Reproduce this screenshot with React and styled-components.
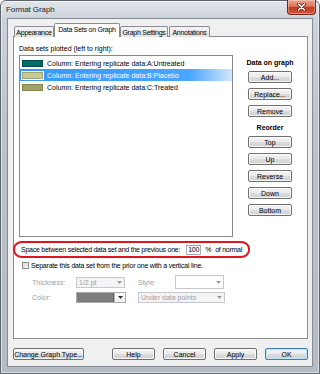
import React from 'react';
import styled, { createGlobalStyle, css } from 'styled-components';

const Global = createGlobalStyle`
  html, body { margin: 0; padding: 0; background: #ffffff; }
  body { font-family: "Liberation Sans", Arial, sans-serif; font-size: 7px; color: #000; }
  #root { width: 320px; height: 374px; }
`;

const Window = styled.div`
  width: 320px;
  height: 374px;
  box-sizing: border-box;
  display: flex;
  flex-direction: column;
  background: linear-gradient(to bottom, #e2e6eb 0px, #cdd3da 18px, #bcc3cb 120px, #b4bbc3 100%);
  border: 1px solid #5f656c;
  border-radius: 6px 6px 0 0;
  box-shadow: inset 0 0 0 1px rgba(255, 255, 255, 0.5);
`;

const TitleBar = styled.div`
  height: 17px;
  display: flex;
  align-items: center;
  padding-left: 5px;
  flex: none;
`;

const Title = styled.span`
  font-size: 8px;
  color: #1e1e1e;
  letter-spacing: -0.1px;
`;

const CloseButton = styled.div`
  align-self: flex-start;
  margin: -1px 3px 0 auto;
  width: 29px;
  height: 15px;
  box-sizing: border-box;
  border: 1px solid #6b2a1c;
  border-top: none;
  border-radius: 0 0 4px 4px;
  background: linear-gradient(to bottom, #e9a797 0%, #dd745e 45%, #c5391c 52%, #d45537 100%);
  box-shadow: inset 0 0 0 1px rgba(255, 210, 200, 0.45);
  display: flex;
  align-items: center;
  justify-content: center;
`;

const Client = styled.div`
  flex: 1;
  margin: 0 6px 6px 6px;
  background: #f0f0f0;
  border: 1px solid #838b94;
  display: flex;
  flex-direction: column;
`;

const TabStrip = styled.div`
  display: flex;
  align-items: flex-end;
  height: 13px;
  margin: 5px 4px -1px 6px;
  position: relative;
  z-index: 1;
`;

const Tab = styled.div`
  box-sizing: border-box;
  width: ${p => p.$w}px;
  height: 11px;
  border: 1px solid #898c95;
  border-bottom: none;
  border-radius: 2px 2px 0 0;
  margin-left: ${p => p.$ml || 0}px;
  background: linear-gradient(to bottom, #f4f4f4, #e3e3e3);
  display: flex;
  align-items: center;
  justify-content: center;
  white-space: nowrap;
  letter-spacing: -0.25px;
  overflow: hidden;
  ${p => p.$active && css`
    height: 14px;
    background: #ffffff;
    padding-bottom: 2px;
  `}
`;

const Panel = styled.div`
  height: 303px;
  box-sizing: border-box;
  margin: 0 4px 0 5px;
  background: #ffffff;
  border: 1px solid #898c95;
  display: flex;
  flex-direction: column;
`;

const TopArea = styled.div`
  display: flex;
  padding: 7px 0 0 5px;
`;

const LeftCol = styled.div`
  width: 214px;
  display: flex;
  flex-direction: column;
`;

const Caption = styled.div`
  line-height: 9px;
  height: 9px;
  margin-bottom: 2px;
  white-space: nowrap;
`;

const List = styled.div`
  height: 182px;
  box-sizing: border-box;
  border: 1px solid #828790;
  background: #ffffff;
  padding-top: 1px;
`;

const ListRow = styled.div`
  height: 12px;
  display: flex;
  align-items: center;
  padding-left: 2px;
  white-space: nowrap;
  ${p => p.$selected && css`
    background: linear-gradient(to right, #3399ff 0%, #4aa6ff 80%, #d2e8fb 100%);
    color: #ffffff;
  `}
`;

const Swatch = styled.span`
  width: 21px;
  height: 7px;
  box-sizing: border-box;
  margin-right: 4px;
  background: ${p => p.$color};
  border: 1px solid ${p => p.$border};
  ${p => p.$selected && css`
    outline: 1px solid #ffffff;
  `}
`;

const RightCol = styled.div`
  margin-left: 15px;
  width: 44px;
  padding-top: 14px;
  display: flex;
  flex-direction: column;
  align-items: stretch;
`;

const GroupHeading = styled.div`
  font-weight: bold;
  line-height: 9px;
  text-align: center;
  white-space: nowrap;
  margin: ${p => p.$top || 0}px -6px 4px;
`;

const Button = styled.div`
  box-sizing: border-box;
  height: 12px;
  width: ${p => (p.$w ? `${p.$w}px` : 'auto')};
  border: 1px solid #707070;
  border-radius: 2px;
  background: linear-gradient(to bottom, #f3f3f3 0%, #ebebeb 48%, #dddddd 52%, #d0d0d0 100%);
  box-shadow: inset 0 0 0 1px rgba(255, 255, 255, 0.75);
  display: flex;
  align-items: center;
  justify-content: center;
  white-space: nowrap;
  margin-bottom: ${p => p.$mb || 0}px;
  ${p => p.$default && css`
    border-color: #3c7fb1;
    box-shadow: inset 0 0 0 1px #bde4f8;
  `}
`;

const SpaceRow = styled.div`
  margin: 4px 0 0 -1px;
  width: 237px;
  height: 17px;
  box-sizing: border-box;
  border: 2px solid #e3141d;
  border-radius: 9px / 8px;
  display: flex;
  align-items: center;
  padding-left: 6px;
  white-space: nowrap;
  letter-spacing: -0.25px;
`;

const NumberBox = styled.div`
  width: 15px;
  height: 10px;
  box-sizing: border-box;
  border: 1px solid #abadb3;
  border-top-color: #9a9da4;
  background: #ffffff;
  margin-left: ${p => p.$ml}px;
  display: flex;
  align-items: center;
  justify-content: flex-end;
  padding-right: 1px;
`;

const Unit = styled.span`
  margin-left: ${p => p.$ml}px;
`;

const CheckRow = styled.div`
  margin: 4px 0 0 8px;
  height: 7px;
  display: flex;
  align-items: center;
  white-space: nowrap;
  letter-spacing: -0.2px;
`;

const CheckBox = styled.span`
  width: 7px;
  height: 7px;
  box-sizing: border-box;
  border: 1px solid #8e8f8f;
  background: linear-gradient(135deg, #d9d9d9, #f6f6f6);
  margin-right: 2px;
  flex: none;
`;

const FieldRow = styled.div`
  display: flex;
  align-items: center;
  height: ${p => p.$h}px;
  margin: ${p => p.$top}px 0 0 18px;
`;

const FieldLabel = styled.span`
  width: ${p => p.$w}px;
  color: #a0a0a0;
  flex: none;
  margin-left: ${p => p.$ml || 0}px;
`;

const Select = styled.div`
  box-sizing: border-box;
  width: ${p => p.$w}px;
  height: ${p => p.$h || 11}px;
  border: 1px solid #c5c8cc;
  background: #f4f4f4;
  color: #a0a0a0;
  display: flex;
  align-items: center;
  padding-left: 2px;
  flex: none;
  margin-left: ${p => p.$ml || 0}px;
  ${p => p.$white && css`
    background: #ffffff;
  `}
`;

const SelectText = styled.span`
  flex: 1;
  white-space: nowrap;
`;

const ArrowSlot = styled.span`
  width: 9px;
  display: flex;
  align-items: center;
  justify-content: center;
  align-self: stretch;
`;

const ColorSelect = styled.div`
  box-sizing: border-box;
  width: 50px;
  height: 11px;
  border: 1px solid #a6a8ab;
  display: flex;
  flex: none;
  background: #ffffff;
`;

const ColorFill = styled.span`
  flex: 1;
  background: #7d7d7d;
  border-right: 1px solid #5f5f5f;
`;

const ColorDrop = styled.span`
  width: 10px;
  display: flex;
  align-items: center;
  justify-content: center;
  background: linear-gradient(to bottom, #ffffff, #eeeeee);
  border-left: 1px solid #bcbcbc;
`;

const Footer = styled.div`
  display: flex;
  align-items: center;
  margin: 9px 4px 0 5px;
  gap: 8px;
`;

const Spacer = styled.div`
  flex: 1;
`;

const Arrow = ({ color = '#9a9a9a' }) => (
  <svg width="5" height="3" viewBox="0 0 5 3">
    <path d="M0 0 H5 L2.5 3 Z" fill={color} />
  </svg>
);

const CloseGlyph = () => (
  <svg width="9" height="8" viewBox="0 0 9 8">
    <path d="M1.5 1 L7.5 7 M7.5 1 L1.5 7" stroke="#5a1b10" strokeWidth="3" strokeLinecap="round" />
    <path d="M1.5 1 L7.5 7 M7.5 1 L1.5 7" stroke="#ffffff" strokeWidth="1.6" strokeLinecap="round" />
  </svg>
);

const rows = [
  { label: 'Column: Entering replicate data:A:Untreated', color: '#006d68', border: '#004c49' },
  { label: 'Column: Entering replicate data:B:Placebo', color: '#c9c995', border: '#a4a46a', selected: true },
  { label: 'Column: Entering replicate data:C:Treated', color: '#a1a16a', border: '#85854f' },
];

export default function App() {
  return (
    <>
      <Global />
      <Window>
        <TitleBar>
          <Title>Format Graph</Title>
          <CloseButton><CloseGlyph /></CloseButton>
        </TitleBar>
        <Client>
          <TabStrip>
            <Tab $w={40}>Appearance</Tab>
            <Tab $w={66} $active>Data Sets on Graph</Tab>
            <Tab $w={48}>Graph Settings</Tab>
            <Tab $w={41} $ml={1}>Annotations</Tab>
          </TabStrip>
          <Panel>
            <TopArea>
              <LeftCol>
                <Caption>Data sets plotted (left to right):</Caption>
                <List>
                  {rows.map(r => (
                    <ListRow key={r.label} $selected={r.selected}>
                      <Swatch $color={r.color} $border={r.border} $selected={r.selected} />
                      {r.label}
                    </ListRow>
                  ))}
                </List>
              </LeftCol>
              <RightCol>
                <GroupHeading>Data on graph</GroupHeading>
                <Button $mb={5}>Add...</Button>
                <Button $mb={5}>Replace...</Button>
                <Button $mb={5}>Remove</Button>
                <GroupHeading $top={1}>Reorder</GroupHeading>
                <Button $mb={5}>Top</Button>
                <Button $mb={5}>Up</Button>
                <Button $mb={5}>Reverse</Button>
                <Button $mb={5}>Down</Button>
                <Button>Bottom</Button>
              </RightCol>
            </TopArea>
            <SpaceRow>
              <span>Space between selected data set and the previous one:</span>
              <NumberBox $ml={6}>100</NumberBox>
              <Unit $ml={4}>%</Unit>
              <Unit $ml={4}>of normal</Unit>
            </SpaceRow>
            <CheckRow>
              <CheckBox />
              Separate this data set from the prior one with a vertical line.
            </CheckRow>
            <FieldRow $h={14} $top={6}>
              <FieldLabel $w={44}>Thickness:</FieldLabel>
              <Select $w={49}>
                <SelectText>1/2 pt</SelectText>
                <ArrowSlot><Arrow /></ArrowSlot>
              </Select>
              <FieldLabel $w={37} $ml={13}>Style:</FieldLabel>
              <Select $w={49} $h={14} $white>
                <SelectText />
                <ArrowSlot><Arrow /></ArrowSlot>
              </Select>
            </FieldRow>
            <FieldRow $h={11} $top={3}>
              <FieldLabel $w={44}>Color:</FieldLabel>
              <ColorSelect>
                <ColorFill />
                <ColorDrop><Arrow color="#333333" /></ColorDrop>
              </ColorSelect>
              <Select $w={87} $ml={12}>
                <SelectText>Under data points</SelectText>
                <ArrowSlot><Arrow /></ArrowSlot>
              </Select>
            </FieldRow>
          </Panel>
          <Footer>
            <Button $w={71}>Change Graph Type...</Button>
            <Spacer />
            <Button $w={43}>Help</Button>
            <Button $w={43}>Cancel</Button>
            <Button $w={43}>Apply</Button>
            <Button $w={43} $default>OK</Button>
          </Footer>
        </Client>
      </Window>
    </>
  );
}
